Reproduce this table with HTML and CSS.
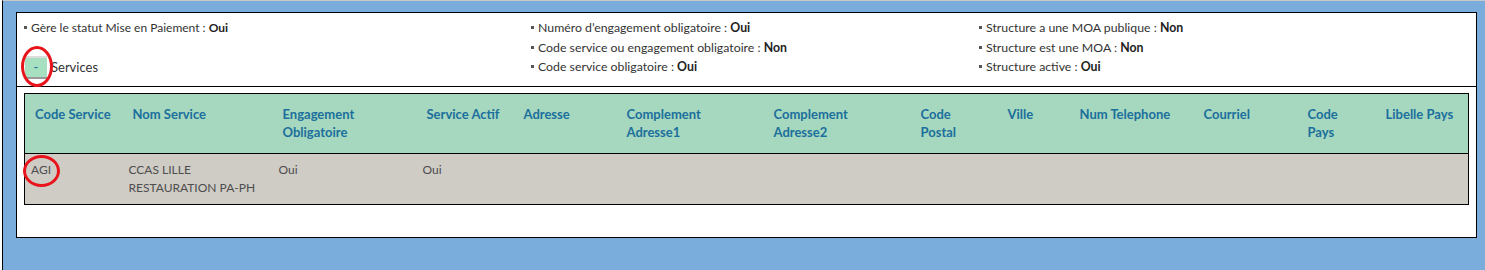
FILE: index.html
```html
<!DOCTYPE html>
<html lang="fr">
<head>
<meta charset="utf-8">
<title>Structure</title>
<link rel="stylesheet" href="styles.css">
</head>
<body>
<div class="page">
  <div class="panel">
    <div class="infos">
      <div class="col col-1">
        <ul class="list">
          <li>Gère le statut Mise en Paiement : <b>Oui</b></li>
        </ul>
        <div class="toggle-row">
          <button class="toggle" type="button">-</button>
          <span class="toggle-label">Services</span>
        </div>
      </div>
      <div class="col col-2">
        <ul class="list">
          <li>Numéro d’engagement obligatoire : <b>Oui</b></li>
          <li>Code service ou engagement obligatoire : <b>Non</b></li>
          <li>Code service obligatoire : <b>Oui</b></li>
        </ul>
      </div>
      <div class="col col-3">
        <ul class="list">
          <li>Structure a une MOA publique : <b>Non</b></li>
          <li>Structure est une MOA : <b>Non</b></li>
          <li>Structure active : <b>Oui</b></li>
        </ul>
      </div>
    </div>
    <div class="table-wrap">
      <table class="services">
        <colgroup>
          <col class="c1"><col class="c2"><col class="c3"><col class="c4"><col class="c5"><col class="c6"><col class="c7"><col class="c8"><col class="c9"><col class="c10"><col class="c11"><col class="c12"><col class="c13">
        </colgroup>
        <thead>
          <tr>
            <th>Code Service</th>
            <th>Nom Service</th>
            <th>Engagement<br>Obligatoire</th>
            <th>Service Actif</th>
            <th>Adresse</th>
            <th>Complement<br>Adresse1</th>
            <th>Complement<br>Adresse2</th>
            <th>Code<br>Postal</th>
            <th>Ville</th>
            <th>Num Telephone</th>
            <th>Courriel</th>
            <th>Code<br>Pays</th>
            <th>Libelle Pays</th>
          </tr>
        </thead>
        <tbody>
          <tr>
            <td>AGI</td>
            <td>CCAS LILLE<br>RESTAURATION PA-PH</td>
            <td>Oui</td>
            <td>Oui</td>
            <td></td><td></td><td></td><td></td><td></td><td></td><td></td><td></td><td></td>
          </tr>
        </tbody>
      </table>
    </div>
  </div>
  <span class="mark mark-toggle"></span>
  <span class="mark mark-agi"></span>
</div>
</body>
</html>
```

FILE: styles.css
```css
html, body {
  margin: 0;
  padding: 0;
  background: #ffffff;
}
body {
  font-family: Lato, "Liberation Sans", sans-serif;
  font-size: 12px;
  color: #333333;
}
.page {
  position: relative;
  margin-left: 2px;
  height: 270px;
  border-left: 1px solid #000000;
  border-top: 1px solid #c9c9c9;
  background: #7aaddb;
  padding: 11px 8px 0 13px;
  box-sizing: border-box;
}
.panel {
  background: #ffffff;
  border: 1px solid #000000;
  height: 226px;
  box-sizing: border-box;
}
.infos {
  display: grid;
  grid-template-columns: 507px 448px 1fr;
  padding: 5px 0 0 6px;
  height: 68px;
  border-bottom: 1px solid #000000;
}
.list {
  list-style: none;
  margin: 0;
  padding: 0;
}
.list li {
  line-height: 19.5px;
  white-space: nowrap;
}
.col-2 .list li,
.col-3 .list li {
  font-size: 12.3px;
}
.list li::before {
  content: "";
  display: inline-block;
  width: 3px;
  height: 3px;
  background: #555555;
  margin: 0 4px 2px 1px;
  vertical-align: middle;
}
.list b {
  color: #222222;
}
.toggle-row {
  display: flex;
  align-items: center;
  margin-top: 18px;
  margin-left: 2px;
}
.toggle {
  width: 22px;
  height: 23px;
  padding: 0;
  background: #a6e0c0;
  border: none;
  border-top: 2px solid #dcdcdc;
  border-bottom: 2px solid #9a9a9a;
  color: #1a6e98;
  font-family: inherit;
  font-size: 13px;
  line-height: 17px;
  box-sizing: border-box;
}
.toggle-label {
  margin-left: 4px;
  font-size: 13px;
  color: #333333;
}
.table-wrap {
  padding: 6px 7px 0 7px;
}
.services {
  width: 100%;
  table-layout: fixed;
  border-collapse: collapse;
  border: 1px solid #000000;
}
.c1 { width: 98px; }
.c2 { width: 150px; }
.c3 { width: 144px; }
.c4 { width: 97px; }
.c5 { width: 103px; }
.c6 { width: 147px; }
.c7 { width: 147px; }
.c8 { width: 87px; }
.c9 { width: 72px; }
.c10 { width: 124px; }
.c11 { width: 104px; }
.c12 { width: 78px; }
.c13 { width: auto; }
.services thead tr {
  background: #a6d8bf;
  border-bottom: 1px solid #000000;
}
.services th {
  text-align: left;
  vertical-align: top;
  font-size: 13px;
  font-weight: 700;
  color: #1b6f9c;
  line-height: 18px;
  padding: 11px 4px 12px 10px;
  height: 36px;
  white-space: nowrap;
}
.services tbody tr {
  background: #cfccc6;
}
.services td {
  vertical-align: top;
  color: #4d4d4d;
  line-height: 18px;
  padding: 7px 4px 7px 6px;
  height: 36px;
}
.mark {
  position: absolute;
  border: 3px solid #e8141b;
  border-radius: 50%;
  box-sizing: border-box;
}
.mark-toggle {
  left: 18px;
  top: 45px;
  width: 32px;
  height: 41px;
}
.mark-agi {
  left: 20px;
  top: 154px;
  width: 37px;
  height: 32px;
}
```
